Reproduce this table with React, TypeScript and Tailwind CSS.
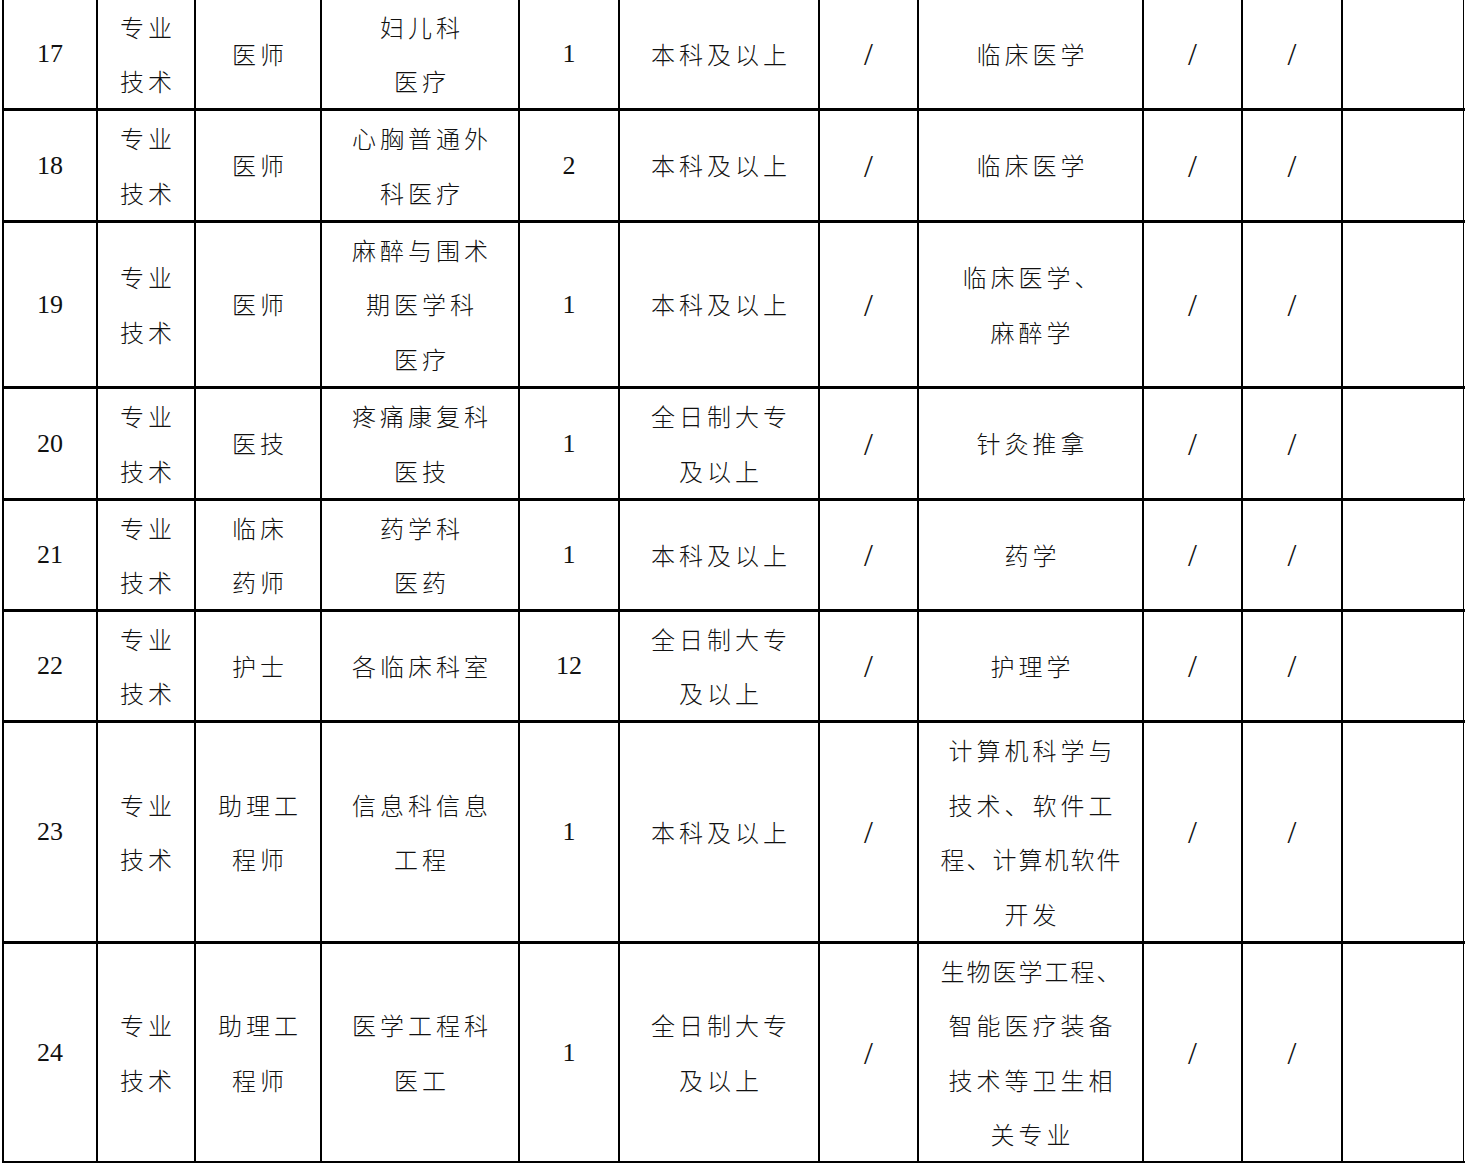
import React from "react";

type Row = {
  no: string;
  h: string;
  pos: string;
  dept: string;
  cnt: string;
  edu: string;
  major: string;
};

// lines beginning with "~" are set with tighter tracking
const rows: Row[] = [
  { no: "17", h: "h-[111px]", pos: "医师", dept: "妇儿科\n医疗", cnt: "1", edu: "本科及以上", major: "临床医学" },
  { no: "18", h: "h-[112px]", pos: "医师", dept: "心胸普通外\n科医疗", cnt: "2", edu: "本科及以上", major: "临床医学" },
  { no: "19", h: "h-[166px]", pos: "医师", dept: "麻醉与围术\n期医学科\n医疗", cnt: "1", edu: "本科及以上", major: "临床医学、\n麻醉学" },
  { no: "20", h: "h-[112px]", pos: "医技", dept: "疼痛康复科\n医技", cnt: "1", edu: "全日制大专\n及以上", major: "针灸推拿" },
  { no: "21", h: "h-[111px]", pos: "临床\n药师", dept: "药学科\n医药", cnt: "1", edu: "本科及以上", major: "药学" },
  { no: "22", h: "h-[111px]", pos: "护士", dept: "各临床科室", cnt: "12", edu: "全日制大专\n及以上", major: "护理学" },
  { no: "23", h: "h-[221px]", pos: "助理工\n程师", dept: "信息科信息\n工程", cnt: "1", edu: "本科及以上", major: "计算机科学与\n技术、软件工\n~程、计算机软件\n开发" },
  { no: "24", h: "h-[219px]", pos: "助理工\n程师", dept: "医学工程科\n医工", cnt: "1", edu: "全日制大专\n及以上", major: "~生物医学工程、\n智能医疗装备\n技术等卫生相\n关专业" },
];

const cjk = "font-['Noto_Sans_CJK_SC','Noto_Sans_CJK_JP',sans-serif] font-light text-[24px] leading-[54.5px] text-[#111]";
const num = "font-['Liberation_Serif','Times_New_Roman',serif] text-[26px] leading-[54px] text-[#111]";
const slash = "font-['Liberation_Serif','Times_New_Roman',serif] font-light text-[32px] leading-[54px] text-[#111]";

function Line({ text }: { text: string }) {
  if (text.startsWith("~")) {
    return <div className="whitespace-nowrap tracking-[2px] pl-[2px]">{text.slice(1)}</div>;
  }
  return <div className="whitespace-nowrap tracking-[4px] pl-[4px]">{text}</div>;
}

function Cjk({ text }: { text: string }) {
  return (
    <div className={cjk}>
      {text.split("\n").map((l, i) => (
        <Line key={i} text={l} />
      ))}
    </div>
  );
}

function Cell({ children, last }: { children?: React.ReactNode; last?: boolean }) {
  return (
    <div
      className={
        "flex items-center justify-center text-center overflow-hidden " +
        (last ? "border-r-[1.5px] border-black" : "border-r-2 border-black")
      }
    >
      {children}
    </div>
  );
}

export default function App() {
  return (
    <div className="w-[1466px] h-[1166px] bg-white overflow-hidden">
      <div className="ml-[2px] w-[1463px] border-l-2 border-black">
        {rows.map((r, idx) => (
          <div
            key={r.no}
            className={
              "grid grid-cols-[94px_98px_126px_198px_100px_200px_99px_225px_99px_100px_121px] " +
              r.h +
              " " +
              (idx === rows.length - 1 ? "border-b-2 border-black" : "border-b-[3px] border-black")
            }
          >
            <Cell>
              <span className={num}>{r.no}</span>
            </Cell>
            <Cell>
              <Cjk text={"专业\n技术"} />
            </Cell>
            <Cell>
              <Cjk text={r.pos} />
            </Cell>
            <Cell>
              <Cjk text={r.dept} />
            </Cell>
            <Cell>
              <span className={num}>{r.cnt}</span>
            </Cell>
            <Cell>
              <Cjk text={r.edu} />
            </Cell>
            <Cell>
              <span className={slash}>/</span>
            </Cell>
            <Cell>
              <Cjk text={r.major} />
            </Cell>
            <Cell>
              <span className={slash}>/</span>
            </Cell>
            <Cell>
              <span className={slash}>/</span>
            </Cell>
            <Cell last />
          </div>
        ))}
      </div>
    </div>
  );
}
